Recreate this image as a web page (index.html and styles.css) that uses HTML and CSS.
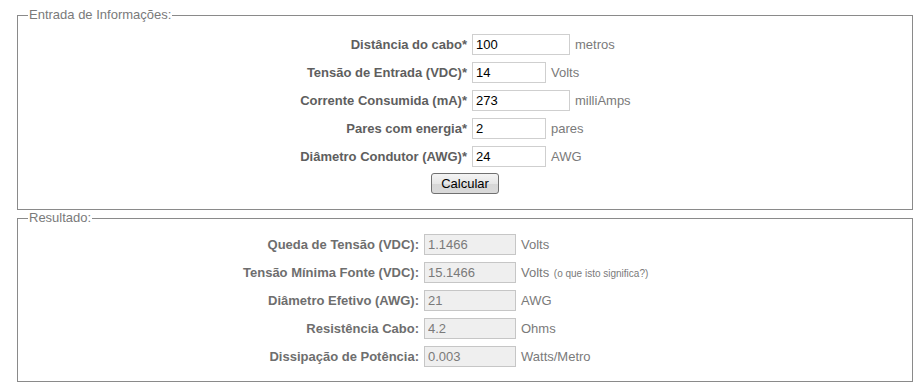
FILE: index.html
```html
<!DOCTYPE html>
<html lang="pt">
<head>
    <meta charset="UTF-8">
    <title>Calculadora de Queda de Tensão</title>
    <link rel="stylesheet" href="styles.css">
</head>
<body>
    <fieldset class="box box-input">
        <legend>Entrada de Informações:</legend>
        <div class="rows">
            <label class="field-label" for="dist">Distância do cabo*</label>
            <div class="field"><input type="text" id="dist" class="wide" value="100"><span class="unit">metros</span></div>

            <label class="field-label" for="vin">Tensão de Entrada (VDC)*</label>
            <div class="field"><input type="text" id="vin" class="narrow" value="14"><span class="unit">Volts</span></div>

            <label class="field-label" for="ma">Corrente Consumida (mA)*</label>
            <div class="field"><input type="text" id="ma" class="wide" value="273"><span class="unit">milliAmps</span></div>

            <label class="field-label" for="pairs">Pares com energia*</label>
            <div class="field"><input type="text" id="pairs" class="narrow" value="2"><span class="unit">pares</span></div>

            <label class="field-label" for="awg">Diâmetro Condutor (AWG)*</label>
            <div class="field"><input type="text" id="awg" class="narrow" value="24"><span class="unit">AWG</span></div>
        </div>
        <div class="actions">
            <button class="calc-btn">Calcular</button>
        </div>
    </fieldset>

    <fieldset class="box box-result">
        <legend>Resultado:</legend>
        <div class="rows">
            <label class="field-label">Queda de Tensão (VDC):</label>
            <div class="field"><input type="text" class="result" value="1.1466" readonly><span class="unit">Volts</span></div>

            <label class="field-label">Tensão Mínima Fonte (VDC):</label>
            <div class="field"><input type="text" class="result" value="15.1466" readonly><span class="unit">Volts <small class="hint">(o que isto significa?)</small></span></div>

            <label class="field-label">Diâmetro Efetivo (AWG):</label>
            <div class="field"><input type="text" class="result" value="21" readonly><span class="unit">AWG</span></div>

            <label class="field-label">Resistência Cabo:</label>
            <div class="field"><input type="text" class="result" value="4.2" readonly><span class="unit">Ohms</span></div>

            <label class="field-label">Dissipação de Potência:</label>
            <div class="field"><input type="text" class="result" value="0.003" readonly><span class="unit">Watts/Metro</span></div>
        </div>
    </fieldset>
</body>
</html>
```

FILE: styles.css
```css
body {
    font-family: 'Liberation Sans', Arial, sans-serif;
    font-size: 13px;
    margin: 0;
    padding: 7px 11px 0 17px;
    background: #ffffff;
    color: #666;
}
.box {
    margin: 0;
    padding: 0;
    border: 1px solid #8a8a8a;
    min-inline-size: 0;
}
legend {
    margin-left: 10px;
    padding: 0 1px;
    font-size: 13px;
    line-height: 16px;
    color: #7a7a7a;
}
.box-input {
    padding: 11px 0 15px;
}
.box-result {
    padding: 8px 0 14px;
}
.rows {
    display: grid;
    grid-auto-rows: 21px;
    row-gap: 7px;
    align-items: center;
    column-gap: 5px;
}
.box-input .rows {
    grid-template-columns: 449px 1fr;
}
.box-result .rows {
    grid-template-columns: 401px 1fr;
}
.field-label {
    text-align: right;
    font-weight: bold;
    color: #5e5e5e;
    white-space: nowrap;
}
.box-result .field-label {
    color: #6e6e6e;
}
.field {
    display: flex;
    align-items: center;
    height: 21px;
}
input {
    box-sizing: border-box;
    height: 21px;
    margin: 0;
    padding: 1px 3px;
    border: 1px solid #cfcfcf;
    font-family: 'Liberation Sans', Arial, sans-serif;
    font-size: 13px;
    color: #000;
    background: #fff;
    outline: none;
}
input.wide {
    width: 98px;
}
input.narrow {
    width: 74px;
}
input.result {
    width: 92px;
    background: #efefef;
    border-color: #c6c6c6;
    color: #7a7a7a;
}
.unit {
    margin-left: 5px;
    color: #7a7a7a;
    white-space: nowrap;
}
.hint {
    font-size: 10px;
    margin-left: 1px;
}
.actions {
    display: flex;
    justify-content: center;
    margin-top: 6px;
}
.calc-btn {
    box-sizing: border-box;
    height: 21px;
    padding: 0 9px;
    border: 1px solid #707070;
    border-radius: 3px;
    background: linear-gradient(#f4f4f4, #e6e6e6 50%, #d6d6d6 51%, #dadada);
    font-family: 'Liberation Sans', Arial, sans-serif;
    font-size: 13px;
    color: #000;
    cursor: pointer;
}
```
